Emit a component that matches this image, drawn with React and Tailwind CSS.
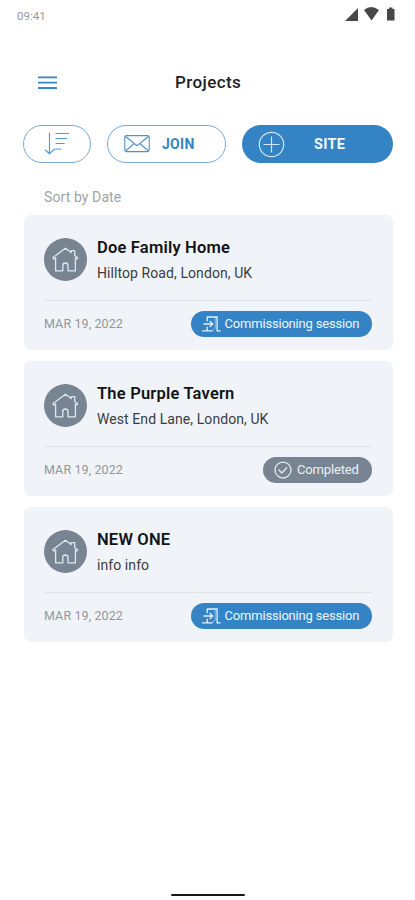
function HouseIcon() {
  return (
    <svg className="h-[43px] w-[43px]" viewBox="0 0 43 43" fill="none" stroke="#dce7f1" strokeWidth="1.3" strokeLinejoin="round" strokeLinecap="round">
      <path d="M11.6 20.2v12.6h7.2v-5.4q0-2.4 2.6-2.4t2.6 2.4v5.4h7.4V20.2" />
      <path d="M11.6 20.2 9.8 21 8.8 19.7 21.4 10.2l5.8 4.4v-2h3.5v4.8l3 2.3-1 1.3-1.3-.8" />
    </svg>
  );
}

function SessionIcon() {
  return (
    <svg className="h-[18px] w-[19px]" viewBox="0 0 19 18" fill="none" stroke="#e4f1fb" strokeWidth="1.3" strokeLinejoin="round">
      <path d="M5.2 6.2V2h9.9v13.9h3.5M0 15.9h10.5M5.2 11.8v4M1.5 9h9M7.6 5.9 10.7 9l-3.1 3.1" />
      <path d="M13.2 2v10.6l-3 3.3" strokeOpacity=".4" />
    </svg>
  );
}

function CompletedIcon() {
  return (
    <svg className="h-[18px] w-[18px]" viewBox="0 0 18 18" fill="none" stroke="#e8edf2" strokeWidth="1.25" strokeLinecap="round" strokeLinejoin="round">
      <circle cx="9" cy="9" r="8" />
      <path d="m5 9 2.8 3 5-5.2" />
    </svg>
  );
}

const projects = [
  { title: "Doe Family Home", place: "Hilltop Road, London, UK", done: false },
  { title: "The Purple Tavern", place: "West End Lane, London, UK", done: true },
  { title: "NEW ONE", place: "info info", done: false },
];

function ProjectCard({ project }) {
  return (
    <article className="h-[135.5px] rounded-[7px] bg-[#f0f4f8] px-[21px] pt-[23px]">
      <div className="flex h-[63px] border-b border-[#dfe4e8]">
        <div className="-ml-[0.5px] h-[43px] w-[43px] shrink-0 rounded-full bg-[#788492]">
          <HouseIcon />
        </div>
        <div className="ml-[10px]">
          <h2 className="text-[16.5px] font-semibold leading-[20px] tracking-[0.2px] text-[#111316]">{project.title}</h2>
          <p className="mt-[5px] text-[14px] leading-[20px] tracking-[0.08px] text-[#3a3d40]">{project.place}</p>
        </div>
      </div>
      <div className="mt-[9.5px] flex h-[28px] items-center justify-between">
        <time className="-ml-[0.5px] text-[12.5px] tracking-[0.1px] text-[#92979e]">MAR 19, 2022</time>
        {project.done ? (
          <span className="flex h-[26.5px] w-[109px] items-center gap-[5px] rounded-full bg-[#788492] pl-[11px] text-[13px] tracking-[-0.15px] text-[#edf1f4]">
            <CompletedIcon />
            Completed
          </span>
        ) : (
          <span className="flex h-[26.5px] w-[181px] items-center gap-[4px] whitespace-nowrap rounded-full bg-[#3483c4] pl-[10.5px] text-[13px] tracking-[-0.19px] text-[#edf6fd]">
            <SessionIcon />
            Commissioning session
          </span>
        )}
      </div>
    </article>
  );
}

export default function App() {
  return (
    <main className="flex h-[900px] w-[415px] flex-col overflow-hidden bg-white font-['Roboto',sans-serif]">
      <div className="flex h-[32px] items-start justify-between pl-[17px] pr-[20px]">
        <span className="mt-[8px] text-[11.5px] leading-[16px] text-[#999]">09:41</span>
        <svg className="mt-[6px] h-[16px] w-[51px]" viewBox="0 0 51 16" fill="#484848">
          <path d="M1 15 14 2v13zM20 4q7-6 15 0l-7.5 10.5zM43 3h2V1.5h3.5V3h2v11.5H43z" />
        </svg>
      </div>
      <header className="flex h-[93px] items-center pl-[38px] pt-[8px]">
        <svg className="h-[14px] w-[19px]" viewBox="0 0 19 14" stroke="#3388c8" strokeWidth="1.8">
          <path d="M0 1.3h19M0 6.7h19M0 12h19" />
        </svg>
        <h1 className="ml-[118px] text-[17px] font-medium tracking-[0.4px] text-[#202124]">Projects</h1>
      </header>
      <div className="flex h-[38px] pl-[23px]">
        <button className="flex h-[38px] w-[68px] items-center justify-center rounded-full border border-[#77aad5]">
          <svg className="h-[24px] w-[26px]" viewBox="0 0 26 24" fill="none" stroke="#549bd2" strokeWidth="1.15" strokeLinecap="round" strokeLinejoin="round">
            <path d="M5.5 1v20.5M1.3 18l4.2 3.7L9.5 18M12 1.5h12.8M12 6.5h10.7M12 11.5h8.3M10 17.3l7-.3" />
          </svg>
        </button>
        <button className="ml-[16px] flex h-[38px] w-[119px] items-center rounded-full border border-[#77aad5] pl-[16px]">
          <svg className="h-[18px] w-[26px]" viewBox="0 0 26 18" fill="none" stroke="#4c94cb" strokeWidth="1.1" strokeLinejoin="round">
            <rect x=".8" y=".6" width="24.4" height="16" rx="1.8" />
            <path d="m1.3 1.3 11.7 9.4L24.7 1.3M1.5 16 9.7 9M24.5 16 16.3 9" />
          </svg>
          <span className="ml-[12px] text-[14px] font-bold tracking-[0.3px] text-[#2f84c3]">JOIN</span>
        </button>
        <button className="ml-[16px] flex h-[38px] w-[151px] items-center rounded-full bg-[#3483c4] pl-[16px]">
          <svg className="h-[27px] w-[27px]" viewBox="0 0 27 27" fill="none" stroke="#cfe7f9" strokeWidth="1.2">
            <circle cx="13.5" cy="13.5" r="12.2" />
            <path d="M13.5 5.5v16M5.5 13.5h16" />
          </svg>
          <span className="ml-[29px] mt-px text-[14.5px] font-bold tracking-[0.3px] text-[#f1f8fd]">SITE</span>
        </button>
      </div>
      <p className="mt-[24px] h-[27.5px] pl-[44px] text-[14px] leading-[20px] tracking-[0.1px] text-[#a0a4a8]">Sort by Date</p>
      <section className="flex flex-col gap-[10.5px] pl-[23.5px] pr-[22px]">
        {projects.map((project) => <ProjectCard key={project.title} project={project} />)}
      </section>
      <div className="mx-auto mb-[4.5px] mt-auto h-[2px] w-[74px] rounded-full bg-[#171717]" />
    </main>
  );
}
